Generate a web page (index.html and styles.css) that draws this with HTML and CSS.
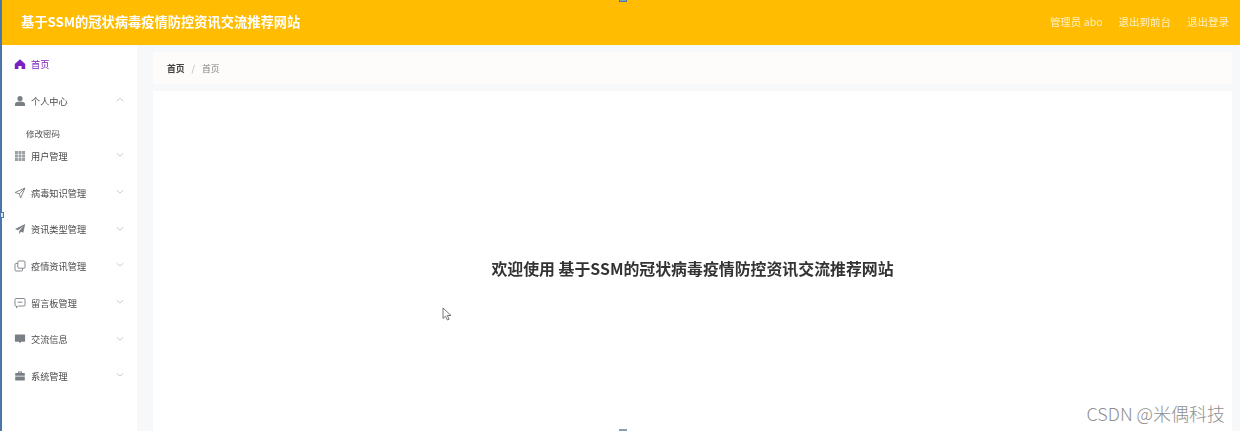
FILE: index.html
```html
<!DOCTYPE html>
<html lang="zh-CN">
<head>
<meta charset="utf-8">
<title>基于SSM的冠状病毒疫情防控资讯交流推荐网站</title>
<link rel="stylesheet" href="styles.css">
</head>
<body>
<div class="app">
  <header class="topbar">
    <div class="brand">基于SSM的冠状病毒疫情防控资讯交流推荐网站</div>
    <nav class="top-links">
      <span>管理员 abo</span>
      <span>退出到前台</span>
      <span>退出登录</span>
    </nav>
  </header>
  <div class="body-row">
    <aside class="sidebar">
      <div class="item active">
        <svg class="ico" viewBox="0 0 12 12"><path d="M6 1.2 11.2 6v5H7.6V8H4.4v3H.8V6z"/></svg>
        <span>首页</span>
      </div>
      <div class="item">
        <svg class="ico" viewBox="0 0 12 12"><circle cx="6" cy="3.5" r="2.6"/><path d="M1 11V9c0-1.600 1.500-2.600 5-2.600s5 1 5 2.600v2z"/></svg>
        <span>个人中心</span>
        <svg class="chev" viewBox="0 0 10 6"><path d="M1 5 5 1.500 9 5"/></svg>
      </div>
      <div class="sub"><span>修改密码</span></div>
      <div class="item tight">
        <svg class="ico pale" viewBox="0 0 12 12"><path d="M1 1h2.900v2.900H1zM4.550 1h2.900v2.900h-2.900zM8.100 1H11v2.900H8.100zM1 4.550h2.900v2.900H1zM4.550 4.550h2.900v2.900h-2.900zM8.100 4.550H11v2.900H8.100zM1 8.100h2.900V11H1zM4.550 8.100h2.900V11h-2.900zM8.100 8.100H11V11H8.100z"/></svg>
        <span>用户管理</span>
        <svg class="chev" viewBox="0 0 10 6"><path d="M1 1.500 5 5 9 1.500"/></svg>
      </div>
      <div class="item">
        <svg class="ico line" viewBox="0 0 12 12"><path d="M11 1 1 5.500l4.300 1.300L6.600 11zM5.300 6.800 11 1"/></svg>
        <span>病毒知识管理</span>
        <svg class="chev" viewBox="0 0 10 6"><path d="M1 1.500 5 5 9 1.500"/></svg>
      </div>
      <div class="item">
        <svg class="ico" viewBox="0 0 12 12"><path d="M11.200 1 1 6l3 1.300L9.500 3 5.200 8v3l1.800-2.300 2.300 1z"/></svg>
        <span>资讯类型管理</span>
        <svg class="chev" viewBox="0 0 10 6"><path d="M1 1.500 5 5 9 1.500"/></svg>
      </div>
      <div class="item">
        <svg class="ico line" viewBox="0 0 12 12"><rect x="3.800" y="1" width="7.200" height="7.200" rx="1"/><path d="M3.800 3.500H2a1 1 0 0 0-1 1V10a1 1 0 0 0 1 1h5.500a1 1 0 0 0 1-1V8.200"/></svg>
        <span>疫情资讯管理</span>
        <svg class="chev" viewBox="0 0 10 6"><path d="M1 1.500 5 5 9 1.500"/></svg>
      </div>
      <div class="item">
        <svg class="ico line" viewBox="0 0 12 12"><path d="M2 1.500h8a1 1 0 0 1 1 1V8a1 1 0 0 1-1 1H4.500L2.500 10.800V9H2A1 1 0 0 1 1 8V2.500a1 1 0 0 1 1-1zM3.500 5.200h5"/></svg>
        <span>留言板管理</span>
        <svg class="chev" viewBox="0 0 10 6"><path d="M1 1.500 5 5 9 1.500"/></svg>
      </div>
      <div class="item">
        <svg class="ico" viewBox="0 0 12 12"><path d="M1.500 1.500h9a.6.6 0 0 1 .6.6v6a.6.6 0 0 1-.6.6H7L6 10.500 5 8.700H1.500a.6.6 0 0 1-.6-.6v-6a.6.6 0 0 1 .6-.6z"/></svg>
        <span>交流信息</span>
        <svg class="chev" viewBox="0 0 10 6"><path d="M1 1.500 5 5 9 1.500"/></svg>
      </div>
      <div class="item">
        <svg class="ico" viewBox="0 0 12 12"><path d="M4 3V1.600h4V3h2.800v2.800H1.200V3zM5 3h2v-.6H5zM1.200 6.500h9.600v4H1.200z"/></svg>
        <span>系统管理</span>
        <svg class="chev" viewBox="0 0 10 6"><path d="M1 1.500 5 5 9 1.500"/></svg>
      </div>
    </aside>
    <main class="main">
      <div class="crumbs">
        <b>首页</b><i>/</i><span>首页</span>
      </div>
      <section class="welcome">
        <h1>欢迎使用 基于SSM的冠状病毒疫情防控资讯交流推荐网站</h1>
      </section>
    </main>
  </div>
</div>
<div class="edge"></div>
<div class="handle h-left"></div>
<div class="handle h-top"></div>
<div class="handle h-bottom"></div>
<svg class="cursor" viewBox="0 0 10 14"><path d="M1 1v10.500l2.600-2.300 1.800 3.800 1.700-.8-1.800-3.700H9z"/></svg>
<div class="watermark">CSDN @米偶科技</div>
</body>
</html>
```
FILE: styles.css
```css
* { box-sizing: border-box; }
html, body { margin: 0; height: 100%; overflow: hidden; background: #fff; }
body { font-family: "Noto Sans CJK SC", "Liberation Sans", sans-serif; }

.app { height: 431px; display: flex; flex-direction: column; }

.topbar {
  height: 45px; flex: none;
  background: #ffbc00;
  display: flex; align-items: center; justify-content: space-between;
  padding: 0 11px 0 21px;
  color: #fff;
}
.brand { font-size: 13.250px; font-weight: 700; transform: translateY(-1px); filter: blur(.4px); }
.top-links { display: flex; gap: 16px; font-size: 10.500px; color: #fdf0c4; transform: translateY(-1px); filter: blur(.4px); }

.body-row { flex: 1; display: flex; min-height: 0; }

.sidebar {
  width: 137px; flex: none; background: #fff;
  padding-top: 0.500px;
  overflow: hidden;
}
.item {
  height: 36.700px;
  display: flex; align-items: center;
  padding: 0 13px 0 14px;
  font-size: 9.200px; color: #4a4a4a;
  filter: blur(.4px);
}
.item span { margin-left: 5px; flex: 1; }
.item.active { color: #7a1fc0; }
.item.active .ico { fill: #7a1fc0; }
.item.tight { margin-top: -3.400px; }
.ico { width: 12px; height: 12px; fill: #7a7f85; flex: none; }
.ico.pale { fill: #9a9ea3; }
.ico.line { fill: none; stroke: #85898e; stroke-width: 1; }
.chev { width: 8px; height: 5px; fill: none; stroke: #b9bcc0; stroke-width: 1; flex: none; margin-top: -2px; }

.sub {
  height: 18px; padding: 5px 0 0 26px;
  margin-top: 4px;
  font-size: 8.500px; line-height: 11px; color: #555;
  overflow: hidden;
  position: relative; z-index: 0;
  filter: blur(.4px);
}

.main {
  flex: 1; min-width: 0;
  background: #f7f8fa;
  padding: 7px 8px 0 16px;
  display: flex; flex-direction: column; gap: 7px;
}
.crumbs {
  height: 32px; flex: none;
  background: #fdfcfb;
  display: flex; align-items: center;
  padding-left: 14px;
  font-size: 8.800px; color: #808080;
  filter: blur(.35px);
}
.crumbs b { color: #444; font-weight: 700; }
.crumbs i { font-style: normal; margin: 0 7px; color: #aaa; }

.welcome {
  flex: 1; background: #fff;
  padding-top: 166px;
  text-align: center;
}
.welcome h1 {
  margin: 0;
  font-size: 15.900px; line-height: 24px; font-weight: 700; color: #333;
  filter: blur(.3px);
}

.edge { position: absolute; left: 0; top: 0; width: 1.500px; height: 431px; background: #4a76a8; }
.handle { position: absolute; background: #dfe8f0; border: 1px solid #4a76a8; }
.h-left { left: 0; top: 212px; width: 4px; height: 6px; }
.h-top { left: 619px; top: -3px; width: 8px; height: 5px; background: #8aa0b0; }
.h-bottom { left: 619px; top: 429px; width: 8px; height: 5px; background: #8aa0b0; border-color: #8aa0b0; }

.cursor { position: absolute; left: 442px; top: 307px; width: 10px; height: 14px; fill: #fff; stroke: #555; stroke-width: .8; }

.watermark {
  position: absolute; right: 15px; top: 403px;
  font-size: 18px; line-height: 20px; color: #8f8f8f; font-weight: 300;
}
```
